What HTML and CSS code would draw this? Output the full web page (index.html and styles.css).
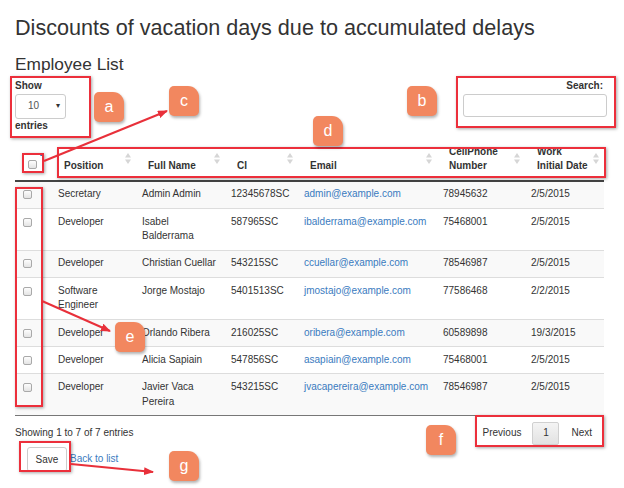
FILE: index.html
```html
<!DOCTYPE html>
<html lang="en">
<head>
<meta charset="utf-8">
<title>Employee List</title>
<link rel="stylesheet" href="styles.css">
</head>
<body>
<div class="page">
  <h1 class="title">Discounts of vacation days due to accumulated delays</h1>
  <h2 class="subtitle">Employee List</h2>

  <div class="controls">
    <div class="length">
      <span class="lbl">Show</span>
      <div class="select"><span>10</span><span class="caret">&#9662;</span></div>
      <span class="lbl">entries</span>
    </div>
    <div class="search">
      <span class="lbl">Search:</span>
      <div class="input"></div>
    </div>
  </div>

  <table class="grid">
    <colgroup>
      <col class="c-chk"><col class="c-pos"><col class="c-name"><col class="c-ci"><col class="c-mail"><col class="c-phone"><col class="c-date">
    </colgroup>
    <thead>
      <tr>
        <th class="th-chk"><span class="cb"></span><span class="sort-asc"></span></th>
        <th>Position<svg class="sort" viewBox="0 0 6 11"><path d="M3 0 L6 4.5 H0 Z M3 11 L6 6.5 H0 Z"/></svg></th>
        <th>Full Name<svg class="sort" viewBox="0 0 6 11"><path d="M3 0 L6 4.5 H0 Z M3 11 L6 6.5 H0 Z"/></svg></th>
        <th>CI<svg class="sort" viewBox="0 0 6 11"><path d="M3 0 L6 4.5 H0 Z M3 11 L6 6.5 H0 Z"/></svg></th>
        <th>Email<svg class="sort" viewBox="0 0 6 11"><path d="M3 0 L6 4.5 H0 Z M3 11 L6 6.5 H0 Z"/></svg></th>
        <th>CellPhone Number<svg class="sort" viewBox="0 0 6 11"><path d="M3 0 L6 4.5 H0 Z M3 11 L6 6.5 H0 Z"/></svg></th>
        <th>Work Initial Date<svg class="sort" viewBox="0 0 6 11"><path d="M3 0 L6 4.5 H0 Z M3 11 L6 6.5 H0 Z"/></svg></th>
      </tr>
    </thead>
    <tbody>
      <tr><td class="td-chk"><span class="cb"></span></td><td>Secretary</td><td>Admin Admin</td><td>12345678SC</td><td><a href="#">admin@example.com</a></td><td>78945632</td><td>2/5/2015</td></tr>
      <tr><td class="td-chk"><span class="cb"></span></td><td>Developer</td><td>Isabel Balderrama</td><td>587965SC</td><td><a href="#">ibalderrama@example.com</a></td><td>75468001</td><td>2/5/2015</td></tr>
      <tr><td class="td-chk"><span class="cb"></span></td><td>Developer</td><td>Christian Cuellar</td><td>543215SC</td><td><a href="#">ccuellar@example.com</a></td><td>78546987</td><td>2/5/2015</td></tr>
      <tr><td class="td-chk"><span class="cb"></span></td><td>Software Engineer</td><td>Jorge Mostajo</td><td>5401513SC</td><td><a href="#">jmostajo@example.com</a></td><td>77586468</td><td>2/2/2015</td></tr>
      <tr><td class="td-chk"><span class="cb"></span></td><td>Developer</td><td>Orlando Ribera</td><td>216025SC</td><td><a href="#">oribera@example.com</a></td><td>60589898</td><td>19/3/2015</td></tr>
      <tr><td class="td-chk"><span class="cb"></span></td><td>Developer</td><td>Alicia Sapiain</td><td>547856SC</td><td><a href="#">asapiain@example.com</a></td><td>75468001</td><td>2/5/2015</td></tr>
      <tr><td class="td-chk"><span class="cb"></span></td><td>Developer</td><td>Javier Vaca Pereira</td><td>543215SC</td><td><a href="#">jvacapereira@example.com</a></td><td>78546987</td><td>2/5/2015</td></tr>
    </tbody>
  </table>

  <div class="footer-row">
    <div class="info">Showing 1 to 7 of 7 entries</div>
    <div class="pager">
      <span class="pg">Previous</span>
      <span class="pg current">1</span>
      <span class="pg">Next</span>
    </div>
  </div>

  <div class="actions">
    <button class="btn" type="button">Save</button>
    <a href="#" class="back">Back to list</a>
  </div>

  <!-- annotation overlay -->
  <div class="hl hl-a"></div>
  <div class="hl hl-b"></div>
  <div class="hl hl-c"></div>
  <div class="hl hl-d"></div>
  <div class="hl hl-e"></div>
  <div class="hl hl-f"></div>
  <div class="hl hl-g"></div>

  <svg class="arrows" width="624" height="488" viewBox="0 0 624 488">
    <defs>
      <marker id="ah" markerUnits="userSpaceOnUse" markerWidth="10" markerHeight="8" refX="9" refY="4" orient="auto">
        <path d="M0 0 L10 4 L0 8 Z" fill="#e8303a"/>
      </marker>
    </defs>
    <line x1="44" y1="161" x2="167" y2="111" marker-end="url(#ah)"/>
    <line x1="42" y1="301" x2="110" y2="331" marker-end="url(#ah)"/>
    <line x1="71" y1="464" x2="153" y2="472" marker-end="url(#ah)"/>
  </svg>

  <div class="badge badge-a">a</div>
  <div class="badge badge-b">b</div>
  <div class="badge badge-c">c</div>
  <div class="badge badge-d">d</div>
  <div class="badge badge-e">e</div>
  <div class="badge badge-f">f</div>
  <div class="badge badge-g">g</div>
</div>
</body>
</html>
```

FILE: styles.css
```css
* { box-sizing: border-box; }
html, body { margin: 0; padding: 0; background: #fff; }
body {
  font-family: "Liberation Sans", Arial, sans-serif;
  font-size: 10px;
  line-height: 14.5px;
  color: #333;
}
a { color: #3a7bc0; text-decoration: none; }

.page {
  position: relative;
  width: 624px;
  height: 488px;
  padding: 0 20px 0 15px;
  overflow: hidden;
}

.title {
  font-size: 21.6px;
  font-weight: normal;
  line-height: 24px;
  margin: 16px 0 0;
}
.subtitle {
  font-size: 17.3px;
  font-weight: normal;
  line-height: 19px;
  margin: 15px 0 0;
}

.controls {
  display: flex;
  justify-content: space-between;
  align-items: flex-start;
  margin-top: 5px;
}
.lbl { display: block; font-weight: bold; }
.select {
  width: 51px;
  height: 25px;
  margin-top: 0.5px;
  border: 1px solid #ccc;
  border-radius: 3px;
  display: flex;
  align-items: center;
  justify-content: space-between;
  padding: 0 5px 0 12px;
  color: #555;
}
.caret { font-size: 8px; color: #333; }
.search {
  width: 144px;
  margin-right: -3px;
  text-align: right;
}
.search .lbl { padding-right: 4px; }
.search .input {
  height: 23px;
  margin-top: 0.5px;
  border: 1px solid #ccc;
  border-radius: 3px;
}

.grid {
  width: 589px;
  margin-top: 5px;
  border-collapse: collapse;
  table-layout: fixed;
  border-bottom: 1px solid #777;
}
.c-chk { width: 37px; }
.c-pos { width: 84px; }
.c-name { width: 89px; }
.c-ci { width: 73px; }
.c-mail { width: 139px; }
.c-phone { width: 88px; }
.c-date { width: 79px; }

.grid th {
  position: relative;
  text-align: left;
  vertical-align: bottom;
  font-weight: bold;
  padding: 6px 14px 6px 12px;
  border-bottom: 2px solid #444;
}
.grid td {
  vertical-align: top;
  padding: 5.9px 6px;
  border-top: 1px solid #ddd;
}
.grid tbody tr:nth-child(odd) td { background: #f9f9f9; }

.sort {
  position: absolute;
  right: 5px;
  top: 50%;
  width: 6px;
  height: 11px;
  margin-top: -6px;
  fill: #d6d6d6;
}
.th-chk { padding-left: 13px !important; }
.th-chk .cb { display: block; margin-bottom: 5px; }
.sort-asc {
  position: absolute;
  left: 25px;
  top: 14px;
  width: 0; height: 0;
  border-left: 2px solid transparent;
  border-right: 2px solid transparent;
  border-bottom: 3px solid #3a6fb0;
}
.td-chk { padding-left: 8px !important; }
.cb {
  display: inline-block;
  width: 9px;
  height: 9px;
  margin-top: 3px;
  border: 1px solid #a9a9a9;
  border-radius: 2px;
  background: linear-gradient(#fdfdfd, #e4e4e4);
  vertical-align: top;
}

.footer-row {
  display: flex;
  justify-content: space-between;
  align-items: center;
  margin-top: 6px;
}
.pager {
  display: flex;
  align-items: center;
  margin-right: 4px;
}
.pg {
  height: 23px;
  display: flex;
  align-items: center;
  padding: 0 8px;
  color: #333;
}
.pg.current {
  width: 27px;
  justify-content: center;
  padding: 0;
  margin: 0 4px 0 3px;
  border: 1px solid #d0d0d0;
  background: linear-gradient(#f4f4f4, #e2e2e2);
  border-radius: 2px;
}

.actions {
  display: flex;
  align-items: center;
  margin-top: 2px;
  padding-left: 12px;
}
.btn {
  width: 40px;
  height: 25px;
  padding: 0;
  font-family: inherit;
  font-size: 10px;
  color: #333;
  background: #fff;
  border: 1px solid #ccc;
  border-radius: 3px;
}
.back { margin-left: 3px; }

/* annotation overlay */
.hl {
  position: absolute;
  border: 2px solid #ec2f3b;
  box-shadow: 1px 1px 3px rgba(0, 0, 0, 0.35);
}
.hl-a { left: 10px; top: 76px; width: 81px; height: 62px; }
.hl-b { left: 456px; top: 76px; width: 160px; height: 52px; }
.hl-c { left: 22px; top: 153px; width: 22px; height: 20px; }
.hl-d { left: 57px; top: 147px; width: 549px; height: 31px; }
.hl-e { left: 15px; top: 187px; width: 28px; height: 220px; }
.hl-f { left: 475px; top: 415px; width: 129px; height: 32px; }
.hl-g { left: 19px; top: 441px; width: 52px; height: 31px; }

.arrows {
  position: absolute;
  left: 0;
  top: 0;
  pointer-events: none;
}
.arrows line { stroke: #e8303a; stroke-width: 2; }

.badge {
  position: absolute;
  width: 30px;
  height: 30px;
  line-height: 29px;
  text-align: center;
  font-size: 16px;
  color: #fff;
  background: #f2875f;
  border-radius: 5px 11px 5px 5px;
  box-shadow: 1px 2px 3px rgba(0, 0, 0, 0.3);
}
.badge-a { left: 94px; top: 92px; }
.badge-b { left: 407px; top: 86px; }
.badge-c { left: 169px; top: 86px; }
.badge-d { left: 313px; top: 116px; }
.badge-e { left: 115px; top: 322px; }
.badge-f { left: 426px; top: 425px; }
.badge-g { left: 169px; top: 451px; }
```
